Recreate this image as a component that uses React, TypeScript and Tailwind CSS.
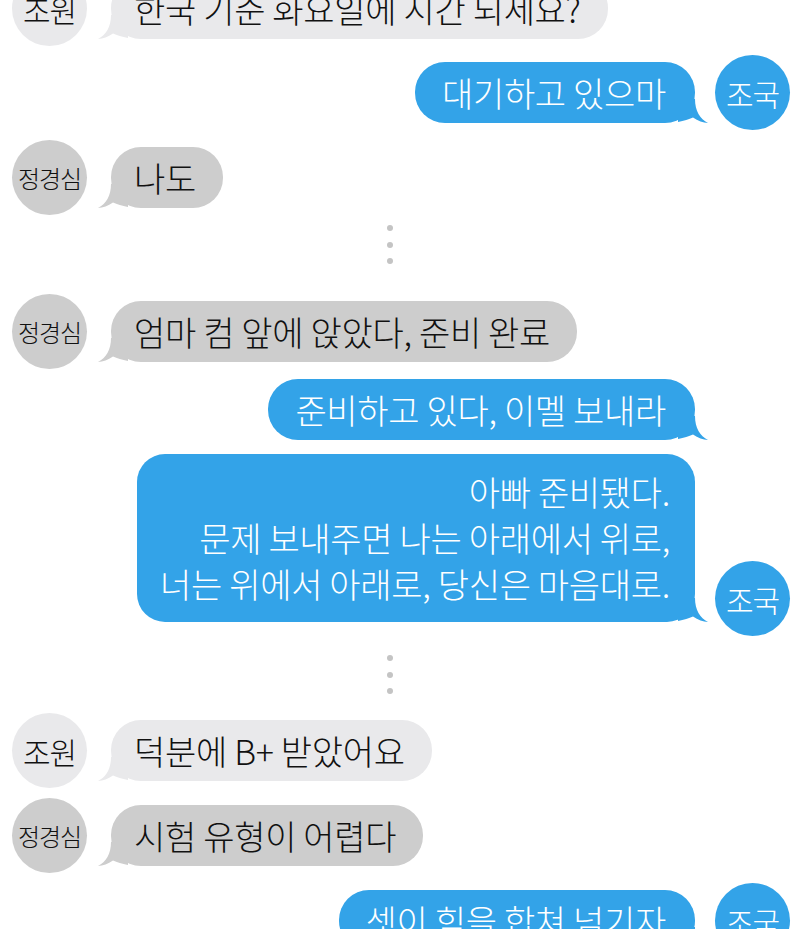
import React from 'react';

type Side = 'left' | 'right';

const Tail = ({ side, color }: { side: Side; color: string }) => (
  <svg
    width="32"
    height="28"
    viewBox="0 0 32 28"
    className={
      side === 'left'
        ? 'absolute bottom-0 left-[-15px]'
        : 'absolute bottom-0 right-[-15px] -scale-x-100'
    }
  >
    <path
      d="M2 28 C10 24 15 16 15 4 L32 4 L32 27 C26 26 21 24 17 22.5 C12 25.5 7 28 2 28 Z"
      fill={color}
    />
  </svg>
);

const Avatar = ({ name, kind }: { name: string; kind: 'light' | 'dark' | 'blue' }) => {
  const bg =
    kind === 'light' ? 'bg-[#e9e9eb] text-[#111]' : kind === 'dark' ? 'bg-[#cdcdcd] text-[#111]' : 'bg-[#33a3e8] text-white';
  const size = name.length > 2 ? 'text-[24px] tracking-[-1px]' : 'text-[30px] tracking-[-1px]';
  return (
    <div className={`w-[75px] h-[75px] shrink-0 rounded-full flex items-center justify-center ${bg} ${size}`}>
      {name}
    </div>
  );
};

const Bubble = ({ side, kind, children }: { side: Side; kind: 'light' | 'dark' | 'blue'; children: React.ReactNode }) => {
  const color = kind === 'light' ? '#e9e9eb' : kind === 'dark' ? '#cdcdcd' : '#33a3e8';
  const cls =
    kind === 'light' ? 'bg-[#e9e9eb] text-[#111]' : kind === 'dark' ? 'bg-[#cdcdcd] text-[#111]' : 'bg-[#33a3e8] text-white';
  return (
    <div
      className={`relative h-[61px] flex items-center rounded-[30px] whitespace-nowrap ${cls} ${
        side === 'left' ? 'pl-[23px] pr-[27px]' : 'pl-[27px] pr-[29px]'
      }`}
    >
      <Tail side={side} color={color} />
      <span className="relative">{children}</span>
    </div>
  );
};

const LeftRow = ({ name, kind, text, mt }: { name: string; kind: 'light' | 'dark'; text: string; mt: string }) => (
  <div className={`flex items-center gap-[24px] pl-[12px] ${mt}`}>
    <Avatar name={name} kind={kind} />
    <Bubble side="left" kind={kind}>{text}</Bubble>
  </div>
);

const RightRow = ({ text, mt, avatar = true }: { text: string; mt: string; avatar?: boolean }) => (
  <div className={`flex items-center justify-end gap-[20px] pr-[10px] ${mt}`}>
    <Bubble side="right" kind="blue">{text}</Bubble>
    {avatar ? <Avatar name="조국" kind="blue" /> : <div className="w-[75px] shrink-0" />}
  </div>
);

const Dots = ({ mt }: { mt: string }) => (
  <div className={`flex flex-col gap-[10.5px] pl-[387px] ${mt}`}>
    <div className="w-[6px] h-[6px] rounded-full bg-[#c4c4c4]" />
    <div className="w-[6px] h-[6px] rounded-full bg-[#c4c4c4]" />
    <div className="w-[6px] h-[6px] rounded-full bg-[#c4c4c4]" />
  </div>
);

export default function App() {
  return (
    <div
      className="w-[800px] h-[929px] overflow-hidden bg-white text-[34px] font-light leading-[46px] tracking-[-0.3px]"
      style={{ fontFamily: '"Noto Sans CJK KR", "Noto Sans", sans-serif' }}
    >
      <div className="flex flex-col -mt-[29px]">
        <LeftRow name="조원" kind="light" text="한국 기준 화요일에 시간 되세요?" mt="mt-0" />
        <RightRow text="대기하고 있으마" mt="mt-[9px]" />
        <LeftRow name="정경심" kind="dark" text="나도" mt="mt-[10px]" />
        <Dots mt="mt-[10px]" />
        <LeftRow name="정경심" kind="dark" text="엄마 컴 앞에 앉았다, 준비 완료" mt="mt-[30px]" />
        <RightRow text="준비하고 있다, 이멜 보내라" mt="mt-[10px]" avatar={false} />

        <div className="flex items-end justify-end gap-[20px] pr-[10px] mt-[14px]">
          <div className="relative rounded-[28px] bg-[#33a3e8] text-white text-right pl-[23px] pr-[25px] py-[15px]">
            <Tail side="right" color="#33a3e8" />
            <div className="relative">
              <div>아빠 준비됐다.</div>
              <div>문제 보내주면 나는 아래에서 위로,</div>
              <div>너는 위에서 아래로, 당신은 마음대로.</div>
            </div>
          </div>
          <div className="mb-[-14px]">
            <Avatar name="조국" kind="blue" />
          </div>
        </div>

        <Dots mt="mt-[33px]" />
        <LeftRow name="조원" kind="light" text="덕분에 B+ 받았어요" mt="mt-[19px]" />
        <LeftRow name="정경심" kind="dark" text="시험 유형이 어렵다" mt="mt-[10px]" />
        <RightRow text="셋이 힘을 합쳐 넘기자" mt="mt-[10px]" />
      </div>
    </div>
  );
}
